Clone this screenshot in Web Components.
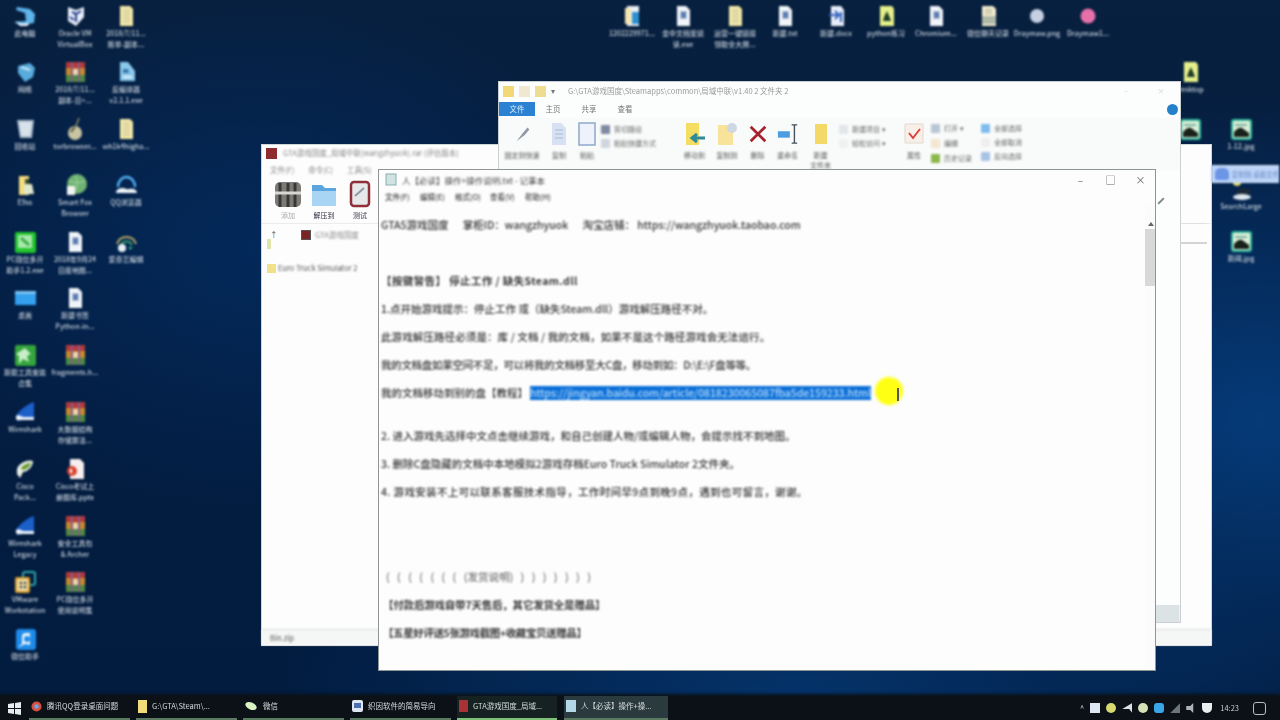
<!DOCTYPE html>
<html lang="zh"><head><meta charset="utf-8"><title>Desktop</title>
<style>
html,body{margin:0;padding:0;width:1280px;height:720px;overflow:hidden;background:#02204a;font-family:"Liberation Sans","Noto Sans CJK SC",sans-serif}
</style></head><body>
<x-desktop></x-desktop>
<script>
const G={
pc:'<path d="M4 3l13 2 5 5-1 9-15 2-5-3 12-1-1-8-9-3z" fill="#5fb4ea"/><path d="M3 17l6 3 8-1-3 3H7z" fill="#f2f6fa"/>',
vbox:'<path d="M5 3l8 3 8-3v10l-8 9-8-5z" fill="#e8eef8"/><path d="M9 8l4 2 5-3M13 10v8M7 13l4 3" stroke="#24408c" stroke-width="2" fill="none"/>',
doc:'<path d="M6 2h10l3 3v17H6z" fill="#f5e9a8"/><path d="M9 6h7M9 9h7M9 12h7M9 15h7M9 18h7" stroke="#b8b7a0" stroke-width="1.2"/>',
wdoc:'<path d="M6 2h9l4 4v16H6z" fill="#f1f5fa"/><path d="M9 8h7M9 11h7M9 14h7" stroke="#9eb0c8" stroke-width="1.3"/><rect x="10" y="8" width="5" height="6" fill="#5a7cb0"/>',
net:'<path d="M5 6l12-3 5 5-2 9-8 5-7-9z" fill="#58acdc"/><path d="M8 7l9 3" stroke="#cfeaf8" stroke-width="2"/>',
rar:'<rect x="3" y="2" width="19" height="6" fill="#b33a3a"/><rect x="3" y="8" width="19" height="7" fill="#c88a2e"/><rect x="3" y="15" width="19" height="7" fill="#4d8a43"/><path d="M9 2v20M16 2v20" stroke="#8a5a8e" stroke-width="2"/><rect x="10" y="9" width="5" height="6" fill="#ecd8a4"/>',
exe:'<path d="M6 2h8l7 9v10H6z" fill="#8cc8ec"/><path d="M9 9h5l1 4H9z" fill="#3b78a8"/><path d="M9 17h9" stroke="#e4f2fa" stroke-width="2"/>',
bin:'<path d="M4 3h17l-2 18H7z" fill="#a9bccb"/><path d="M6 5h13l-2 14H8z" fill="#d8e2ea"/>',
tor:'<path d="M16 1l-3 8" stroke="#8a8a68" stroke-width="1.6"/><ellipse cx="12" cy="16" rx="7" ry="7" fill="#c8c4a4"/><path d="M8 15c2-3 3-4 4-5" stroke="#5a5a3e" stroke-width="2"/>',
fe:'<path d="M6 3h10v19H6z" fill="#f4dd7e"/><path d="M11 11h8l2 10H11z" fill="#dfe8cc"/><path d="M12 6h4v5h-4z" fill="#3e4d2c"/>',
sf:'<circle cx="14" cy="11" r="10" fill="#6fb272"/><path d="M4 13h8v9H4z" fill="#f2f6f2"/><path d="M12 3c3 4 3 10 0 16M6 8c6 2 10 2 16 0" stroke="#a8d8a8" fill="none"/>',
qq:'<path d="M4 14A8.500 10 0 0 1 21 14" fill="none" stroke="#52aef0" stroke-width="2.500"/><path d="M2 20c0-4 4-5 7-5s3 2 6 1 8 0 8 4z" fill="#eef5fa"/>',
wx:'<rect x="2" y="2" width="21" height="21" rx="2" fill="#22c52e"/><rect x="5" y="5" width="14" height="13" fill="#a8e8ac"/><path d="M8 8l8 7" stroke="#2aa838" stroke-width="2.500"/>',
arc:'<path d="M3 14a10 10 0 0 1 19 0" stroke="#b8a868" stroke-width="2" fill="none"/><path d="M7 15a6 6 0 0 1 11 0" stroke="#3aa068" stroke-width="2" fill="none"/><circle cx="8" cy="18" r="4" fill="#e8f0f6"/><path d="M15 16l4 2-4 2z" fill="#2aa878"/>',
fold:'<rect x="2" y="5" width="21" height="14" fill="#34a0ee"/><rect x="2" y="5" width="21" height="3" fill="#7cc4f4"/>',
gr:'<rect x="2" y="2" width="21" height="21" rx="2" fill="#35a53c"/><path d="M12 5l6 6-4 2 2 6-6-3-4 5v-8l-3-2z" fill="#c8eec8"/>',
ws:'<path d="M21 2v15H11L5 21c-2-2-3-5 0-8 4-5 10-9 16-11z" fill="#1b5fc8"/><path d="M3 16c3-2 5 1 8 1h10v3H9c-2 0-5 1-6-1z" fill="#eef3fb"/>',
cis:'<path d="M4 12c2-6 10-10 16-8 0 6-6 11-10 11l-3 6-3-4z" fill="#e8efe4"/><path d="M8 11c2-3 6-5 10-5-1 4-5 7-9 7z" fill="#6c9a32"/>',
ppt:'<path d="M7 2h10l4 4v16H7z" fill="#f6eeee"/><circle cx="9" cy="14" r="5" fill="#d8432e"/><path d="M8 12v4" stroke="#fff" stroke-width="2"/>',
vm:'<rect x="10" y="2" width="12" height="13" rx="2" fill="none" stroke="#2fa6a8" stroke-width="2"/><rect x="3" y="8" width="13" height="14" rx="1" fill="#e8d8a0" stroke="#d89a2c" stroke-width="2"/><path d="M7 12h2v2H7zM11 12h2v2h-2zM7 16h2v2H7zM11 16h2v2h-2z" fill="#223"/>',
app:'<rect x="3" y="2" width="20" height="21" rx="3" fill="#1f8be8"/><path d="M17 6h-5c-2 0-3 2-3 4v6c0 2-4 3-3 4l6-3 5 1z" fill="#e8f4fc"/><circle cx="14" cy="12" r="3" fill="#1f8be8"/>',
img:'<rect x="3" y="3" width="19" height="19" rx="2" fill="#dff0d8" stroke="#2fb79a" stroke-width="2"/><path d="M5 15c3-4 6-5 8-4l7 5v4H5z" fill="#18201a"/><path d="M6 8h12" stroke="#7ab0a0" stroke-width="2"/>',
pybk:'<path d="M6 2h12l2 3v17H6z" fill="#e6f08a"/><path d="M9 17c1-5 3-8 4-10 1 3 3 6 4 10z" fill="#1f3c28"/>',
bdoc:'<path d="M7 2h10l3 4v16H7z" fill="#e8eef8"/><path d="M5 11h10M11 7l4 4-4 4" stroke="#3160c0" stroke-width="2" fill="none"/><path d="M17 8v10" stroke="#3160c0" stroke-width="2"/>',
mdoc:'<path d="M6 2h11l3 3v17H6z" fill="#f2ecd0"/><path d="M6 12h14v8H6z" fill="#b0b8a8"/><path d="M9 6h7M9 9h7" stroke="#9a9a80"/>',
bk:'<path d="M7 2h12v20H7z" fill="#e9eff6"/><path d="M5 4h6v16H5z" fill="#f3e6b0"/><rect x="12" y="8" width="7" height="12" fill="#2f90d0"/>',
grey:'<circle cx="12" cy="12" r="7" fill="#c6d0e2"/>',pink:'<circle cx="12" cy="12" r="7.500" fill="#e870a8"/>',
search:'<circle cx="8" cy="5" r="4" fill="#e0dc6e"/><path d="M7 15c3-4 9-4 13-3l2 5-15 1z" fill="#1d2a34"/><ellipse cx="13" cy="20" rx="9" ry="3" fill="#dfe8f0"/>'
};
const svg=(k,s=24)=>`<svg width="${s}" height="${s}" viewBox="0 0 24 24" aria-hidden="true">${G[k]||''}</svg>`;

class Base extends HTMLElement{
  mount(html){const r=this.attachShadow({mode:'open'});r.innerHTML=html;return r}
}
customElements.define('x-icon',class extends Base{connectedCallback(){
  const a=n=>this.getAttribute(n);
  this.mount(`<style>:host{position:absolute;left:${a('cx')-25}px;top:${a('cy')-12}px;width:50px;display:flex;flex-direction:column;align-items:center;color:#c6d0da;font:7px/11px "Noto Sans CJK SC",sans-serif;text-align:center;pointer-events:none}
  svg{display:block;filter:blur(.8px)}
  .l{white-space:nowrap;filter:blur(.8px);overflow:hidden;width:50px;font-weight:500}</style>
  ${svg(a('g'))}<div class="l">${(a('t')||'').split('|').map(s=>`<div>${s}</div>`).join('')}</div>`)
}});
customElements.define('x-rb',class extends Base{connectedCallback(){
  const a=n=>this.getAttribute(n);
  this.mount(`<style>:host{display:flex;flex-direction:column;align-items:center;width:${a('w')}px;font:7px/10px "Noto Sans CJK SC",sans-serif;color:#555;flex:none;text-align:center}
  .i{height:${a('h')||32}px;display:flex;align-items:center;justify-content:center;filter:blur(.5px)}.t{filter:blur(.8px);white-space:nowrap}</style>
  <div class="i"><slot></slot></div><div class="t">${(a('t')||'').split('|').map(s=>`<div>${s}</div>`).join('')}</div>`)
}});
customElements.define('x-rl',class extends Base{connectedCallback(){
  const a=n=>this.getAttribute(n);
  this.mount(`<style>:host{display:flex;flex-direction:column;width:${a('w')}px;flex:none;gap:${a('gap')||4}px;padding-top:${a('top')||4}px;font:7px/10px "Noto Sans CJK SC",sans-serif;color:#666}
  div{display:flex;gap:4px;align-items:center;white-space:nowrap;filter:blur(.8px)}
  i{display:block;width:9px;height:9px;flex:none;border-radius:1px}</style>
  ${a('t').split('|').map(x=>{const[c,s]=x.split(':');return `<div><i style="background:${c}"></i>${s}</div>`}).join('')}`)
}});
customElements.define('x-explorer',class extends Base{connectedCallback(){
  this.mount(`<style>:host{position:absolute;left:499px;top:82px;width:681px;height:540px;background:#fcfdfd;display:flex;flex-direction:column;box-shadow:0 0 0 1px #c9cfd3;font:7.500px/12px "Noto Sans CJK SC",sans-serif;color:#777}
  .tb{height:18px;display:flex;align-items:center;padding:0 4px;gap:5px;flex:none;filter:blur(.5px)}
  .tb i{display:block;width:11px;height:11px}
  .ti{margin-left:8px;filter:blur(.5px);color:#9a9a9a;white-space:nowrap;flex:1}
  .ctl{width:30px;text-align:center;color:#d4d4d4}
  .tabs{height:18px;display:flex;align-items:center;flex:none;filter:blur(.6px);position:relative}
  .tabs span{width:36px;text-align:center}
  .tabs .f{background:#2b82d2;color:#d9ecfb;height:14px;line-height:14px}
  .tabs b{position:absolute;right:2px;top:4px;width:11px;height:11px;border-radius:50%;background:#2480c8}
  .rib{display:flex;height:52px;flex:none;background:#f9fafa;align-items:flex-start}
  .body{flex:1;position:relative}
  .sb{position:absolute;left:656px;right:0;bottom:0;height:17px;background:#eef1f1}
  .sb::before{content:"";position:absolute;left:0;top:0;width:24px;height:17px;background:#dbe3e5}
  </style>
  <div class="tb"><i style="background:#f3d878"></i><i style="background:#f0e8d0"></i><i style="background:#eedc90"></i><span>▾</span><span class="ti">G:\\GTA游戏国度\\Steamapps\\common\\局域中联\\v1.40 2 文件夹 2</span><span class="ctl">–</span><span class="ctl">×</span></div>
  <div class="tabs"><span class="f">文件</span><span>主页</span><span>共享</span><span>查看</span><b></b></div>
  <div class="rib">
    <x-rb w="46" t="固定到快速"><svg width="22" height="22" viewBox="0 0 24 24"><path d="M6 20l7-9 5-6 2 2-5 6z" fill="#8d9aa5"/></svg></x-rb>
    <x-rb w="28" t="复制"><svg width="22" height="26" viewBox="0 0 22 26"><path d="M4 2h9l5 5v17H4z" fill="#d7e1f2"/><path d="M7 9h8M7 13h8M7 17h8" stroke="#a9bbd8"/></svg></x-rb>
    <x-rb w="28" t="粘贴"><svg width="20" height="26" viewBox="0 0 20 26"><rect x="2" y="2" width="16" height="22" fill="#eef3fb" stroke="#8fa8cc" stroke-width="1.500"/></svg></x-rb>
    <x-rl w="76" t="#7d8aa0:剪切路径|#cfd6de:粘贴快捷方式" gap="4" top="6"></x-rl>
    <x-rb w="35" t="移动到"><svg width="24" height="26" viewBox="0 0 24 26"><path d="M3 2h13v22H3z" fill="#f5dd62"/><path d="M10 17h12M14 13l-5 4 5 4" stroke="#2f8a9a" stroke-width="3" fill="none"/></svg></x-rb>
    <x-rb w="30" t="复制到"><svg width="24" height="26" viewBox="0 0 24 26"><path d="M3 4h15v20H3z" fill="#f8e39a"/><circle cx="17" cy="7" r="5" fill="#cfd8e2"/></svg></x-rb>
    <x-rb w="31" t="删除"><svg width="22" height="22" viewBox="0 0 24 24"><path d="M4 4l16 16M20 4L4 20" stroke="#a8222e" stroke-width="3"/></svg></x-rb>
    <x-rb w="29" t="重命名"><svg width="22" height="22" viewBox="0 0 24 24"><rect x="1" y="9" width="13" height="7" fill="#4c9ce0"/><path d="M19 2v20M16 2h6M16 22h6" stroke="#44505c" stroke-width="1.500"/></svg></x-rb>
    <x-rb w="37" t="新建|文件夹"><svg width="18" height="24" viewBox="0 0 18 24"><rect x="3" y="2" width="12" height="20" fill="#f5d968"/></svg></x-rb>
    <x-rl w="58" t="#e2e6ea:新建项目 ▾|#eef0f2:轻松访问 ▾" gap="4" top="6"></x-rl>
    <x-rb w="34" t="属性"><svg width="24" height="26" viewBox="0 0 24 26"><path d="M3 3h18v19H3z" fill="#f7efe8" stroke="#e4d8d0"/><path d="M7 12l4 5 7-9" stroke="#d8433c" stroke-width="2" fill="none"/></svg></x-rb>
    <x-rl w="50" t="#b8c6d6:打开 ▾|#f4e6d0:编辑|#8cb84c:历史记录" gap="5" top="5"></x-rl>
    <x-rl w="58" t="#7fbcee:全部选择|#efefef:全部取消|#a8c4e4:反向选择" gap="4" top="5"></x-rl>
  </div>
  <div class="body"><div class="sb"></div></div>`)
}});
customElements.define('x-rar',class extends Base{connectedCallback(){
  this.mount(`<style>:host{position:absolute;left:262px;top:145px;width:949px;height:500px;background:#fdfdfd;display:flex;flex-direction:column;box-shadow:0 0 0 1px #cfd6d8;font:7.500px/12px "Noto Sans CJK SC",sans-serif;color:#888}
  .t{height:16px;display:flex;align-items:center;gap:6px;padding:0 4px;flex:none}
  .t i{display:block;width:11px;height:11px;background:#8e2c30}
  .t span,.m span,.a span,.r span,.s{filter:blur(.8px);white-space:nowrap}
  .m{height:18px;display:flex;align-items:center;gap:14px;padding:0 8px;flex:none}
  .tools{height:44px;display:flex;padding-left:10px;flex:none;gap:4px}
  .tb{width:32px;display:flex;flex-direction:column;align-items:center;font-size:7px;color:#555}
  .tb svg{display:block;filter:blur(.6px)}
  .tb span{filter:blur(.7px)}
  .a{height:22px;display:flex;align-items:center;gap:5px;padding:0 8px 0 40px;border-top:1px solid #ececec;flex:none;position:relative;box-sizing:border-box}
  .a i{display:block;width:8px;height:8px;background:#7a2426;outline:1px solid #555}
  .a b{position:absolute;left:8px;color:#555;font-weight:400}
  .r{display:flex;align-items:center;gap:2px;height:18px;margin-top:14px;padding-left:5px;color:#555;position:relative;flex:none}
  .r i{display:block;width:9px;height:9px;background:#efe28a}
  .hd{position:absolute;left:5px;top:94px;width:4px;height:10px;background:#dfe4a8}
  .sp{flex:1}
  .rt{position:absolute;left:918px;top:78px;width:27px;height:18px;border-top:1px solid #e0e0e0;border-bottom:2px solid #d4d4d4}
  .s{height:16px;flex:none;border-top:1px solid #d8dcdc;background:#f5f6f6;padding:1px 8px;color:#555;line-height:14px;box-sizing:border-box}
  </style>
  <div class="t"><i></i><span>GTA游戏国度_局域中联(wangzhyuok).rar (评估版本)</span></div>
  <div class="m"><span>文件(F)</span><span>命令(C)</span><span>工具(S)</span></div>
  <div class="tools">
    <div class="tb"><svg width="32" height="30" viewBox="0 0 32 30"><rect x="3" y="3" width="26" height="25" rx="5" fill="#7c7a76"/><path d="M8 4v24M16 4v24M23 4v24" stroke="#3a3835" stroke-width="3"/><path d="M3 14h26" stroke="#d8d8d2" stroke-width="3"/></svg><span style="color:#aaa">添加</span></div>
    <div class="tb"><svg width="32" height="30" viewBox="0 0 32 30"><path d="M4 6h10l3 3h11v18H4z" fill="#5ca5df"/><path d="M4 12h24v15H4z" fill="#a9d5f5"/></svg><span style="color:#334">解压到</span></div>
    <div class="tb"><svg width="28" height="30" viewBox="0 0 28 30"><rect x="5" y="3" width="18" height="24" rx="3" fill="#e6e8ea" stroke="#8f2f3a" stroke-width="2.500"/><path d="M9 17l9-8" stroke="#8a9aa4" stroke-width="2"/></svg><span style="color:#334">测试</span></div>
  </div>
  <div class="a"><b>↑</b><i></i><span>GTA游戏国度</span></div>
  <div class="hd"></div>
  <div class="r"><i></i><span>Euro Truck Simulator 2</span></div>
  <div class="rt"></div>
  <div class="sp"></div>
  <div class="s">Bin.zip</div>`)
}});
customElements.define('x-line',class extends Base{connectedCallback(){
  const a=n=>this.getAttribute(n);
  this.mount(`<style>:host{display:block;height:28px;line-height:28px;margin-top:${a('mt')||0}px;white-space:pre;margin-left:${a('ml')||0}px;letter-spacing:${a('ls')||0}px;word-spacing:${a('ws')||0}px;color:${a('c')||'inherit'};filter:blur(.8px);font-weight:${a('fw')||500}}
  ::slotted(mark){background:#0b6fd8;color:#b8dcfa;padding:0;display:inline-block;line-height:14px;margin-left:2px;letter-spacing:-.08px}</style><slot></slot>`)
}});
customElements.define('x-notepad',class extends Base{connectedCallback(){
  this.mount(`<style>:host{position:absolute;left:379px;top:170px;width:776px;height:500px;background:#fdfdfd;display:flex;flex-direction:column;box-shadow:0 0 0 1px #8f9494;font:10.500px/14px "Noto Sans CJK SC",sans-serif;color:#363636}
  .t{height:19px;display:flex;align-items:center;padding:0 2px 0 6px;gap:5px;flex:none;font-size:8.500px;color:#444}
  .t svg{filter:blur(.6px)}
  .t span{filter:blur(.8px);white-space:nowrap;flex:1}
  .t em{font-style:normal;width:30px;margin-left:-5px;padding-left:5px;box-sizing:border-box;text-align:center;font-size:10px;color:#666;filter:blur(.5px)}
  .m{height:16px;display:flex;align-items:center;gap:7px;padding:0 0 0 6px;flex:none;font-size:7.500px;color:#444;filter:blur(.8px);font-weight:500}
  .m span{width:28px;white-space:nowrap}
  .c{flex:1;display:flex;min-height:0;padding-top:6px}
  .tx{flex:1;padding:0 0 0 2px}
  .sb{width:10px;flex:none;position:relative;background:#fbfbfb;margin-top:-6px}
  .sb::before{content:"";position:absolute;left:0;right:0;top:24px;height:57px;background:#d7d9d9;filter:blur(.5px)}
  .sb::after{content:"";position:absolute;left:3px;top:17px;border:3px solid transparent;border-bottom:4px solid #666;border-top:0}
  </style>
  <div class="t"><svg width="12" height="13" viewBox="0 0 12 13"><rect x="1" y="1" width="10" height="11" fill="#cfe3e2" stroke="#8ab0b0"/></svg><span>人【必读】操作+操作说明.txt - 记事本</span><em>–</em><em>□</em><em>×</em></div>
  <div class="m"><span>文件(F)</span><span>编辑(E)</span><span>格式(O)</span><span>查看(V)</span><span>帮助(H)</span></div>
  <div class="c"><div class="tx">
    <x-line>GTA5游戏国度      掌柜ID：wangzhyuok      淘宝店铺： https://wangzhyuok.taobao.com</x-line>
    <x-line mt="28" fw="600" ls=".4">【按键警告】 停止工作 / 缺失Steam.dll</x-line>
    <x-line>1.点开始游戏提示：停止工作 或（缺失Steam.dll）游戏解压路径不对。</x-line>
    <x-line ls=".1">此游戏解压路径必须是：库 / 文档 / 我的文档，如果不是这个路径游戏会无法运行。</x-line>
    <x-line ls="-.3">我的文档盘如果空间不足，可以将我的文档移至大C盘，移动到如：D:\\E:\\F盘等等。</x-line>
    <x-line>我的文档移动到别的盘【教程】<mark>https://jingyan.baidu.com/article/0818230065087fba5de159233.html</mark></x-line>
    <x-line mt="15">2. 进入游戏先选择中文点击继续游戏，和自己创建人物/或编辑人物，会提示找不到地图。</x-line>
    <x-line>3. 删除C盘隐藏的文档中本地模拟2游戏存档Euro Truck Simulator 2文件夹。</x-line>
    <x-line ls=".35">4. 游戏安装不上可以联系客服技术指导，工作时间早9点到晚9点，遇到也可留言，谢谢。</x-line>
    <x-line mt="57" ml="5" ws="5" c="#777">( ( ( ( ( ( ( (发货说明) ) ) ) ) ) ) )</x-line>
    <x-line fw="600" ml="2" ls="-.2">【付款后游戏自带7天售后，其它发货全是赠品】</x-line>
    <x-line fw="600" ml="2" ls="-.4">【五星好评送5张游戏截图+收藏宝贝送赠品】</x-line>
  </div><div class="sb"></div></div>`)
}});
customElements.define('x-task',class extends Base{connectedCallback(){
  const a=n=>this.getAttribute(n);const act=a('act');
  this.mount(`<style>:host{display:flex;align-items:center;gap:5px;width:${a('w')||101}px;height:24px;flex:none;box-sizing:border-box;padding:0 4px 2px 2px;margin-right:${a('mr')||6}px;color:#d5dbdc;font:7.500px/12px "Noto Sans CJK SC",sans-serif;background:${act==='2'?'#2b3a3f':act==='1'?'#152221':'transparent'};border-bottom:2px solid ${act==='1'?'#7dc078':'#5b7a62'}}
  span{white-space:nowrap;overflow:hidden;filter:blur(.7px)}svg{filter:blur(.6px);flex:none}</style>
  <slot></slot><span>${a('t')}</span>`)
}});
customElements.define('x-taskbar',class extends Base{connectedCallback(){
  this.mount(`<style>:host{height:24px;flex:none;display:flex;align-items:flex-end;background:#0b1116;box-shadow:0 -2px 3px #0b1116;position:relative}
  .st{width:29px;height:24px;display:flex;align-items:center;justify-content:center;flex:none}
  .st svg{filter:blur(.5px)}
  .tray{margin-left:auto;height:24px;display:flex;align-items:center;gap:6px;color:#c8d0d4;font:7.500px/12px "Noto Sans CJK SC",sans-serif;padding-right:14px;filter:blur(.7px)}
  .tray i{display:block;width:10px;height:10px;flex:none}
  </style>
  <div class="st"><svg width="13" height="13" viewBox="0 0 13 13"><path d="M0 2l6-1v5H0zM7 1l6-1v6H7zM0 7h6v5l-6-1zM7 7h6v6l-6-1z" fill="#e4ecf0"/></svg></div>
  <slot></slot>
  <div class="tray"><span>^</span><i style="background:#dfe6f4"></i><i style="background:#d8d870;border-radius:50%"></i><i style="background:#d8e0e8;clip-path:polygon(0 60%,100% 0,100% 100%,70% 60%)"></i><i style="background:#d4e2b8;border-radius:50%"></i><i style="background:#38a6e8;border-radius:3px"></i><i style="background:#6a767c;clip-path:polygon(100% 0,100% 100%,0 100%)"></i><i style="background:#aab4ba;clip-path:polygon(0 30%,40% 30%,70% 0,70% 100%,40% 70%,0 70%)"></i><i style="background:#e8edf0;border-radius:0 0 5px 5px"></i><span style="margin:0 8px 0 2px">14:23</span><i style="border:1px solid #b4bec4;border-radius:3px;width:11px;height:11px"></i></div>`)
}});
customElements.define('x-desktop',class extends Base{connectedCallback(){
  const ic=[
  [25,16,'pc','此电脑'],[75,16,'vbox','Oracle VM|VirtualBox'],[126,16,'doc','2018/7/11...|账单-副本...'],
  [25,72,'net','网络'],[75,72,'rar','2018/7/11...|副本-日+...'],[126,72,'exe','反编译器|v2.1.1.exe'],
  [25,129,'bin','回收站'],[75,129,'tor','torbrowser...'],[126,129,'doc','wh1k4higha...'],
  [25,185,'fe','E9ss'],[75,185,'sf','Smart Fox|Browser'],[126,185,'qq','QQ浏览器'],
  [25,242,'wx','PC微信多开|助手1.2.exe'],[75,242,'wdoc','2018年9月24|日度地图...'],[126,242,'arc','爱奇艺编辑'],
  [25,298,'fold','桌面'],[75,298,'wdoc','新建书签|Python-in...'],
  [25,355,'gr','新能工具安装|合集'],[75,355,'rar','fragments.h...'],
  [25,412,'ws','Wireshark'],[75,412,'rar','大数据结构|存储算法...'],
  [25,469,'cis','Cisco|Pack...'],[75,469,'ppt','Cisco考试上|册题库.pptx'],
  [25,526,'ws','Wireshark|Legacy'],[75,526,'rar','安全工具包|& Archer'],
  [25,582,'vm','VMware|Workstation'],[75,582,'rar','PC微信多开|使用说明集'],
  [25,639,'app','微信助手'],
  [632,16,'bk','1202229971...'],[683,16,'wdoc','金中文档案说|读.exe'],[735,16,'doc','运营一键链接|领取全大牌...'],[785,16,'wdoc','新建.txt'],[836,16,'bdoc','新建.docx'],[886,16,'pybk','python练习'],[936,16,'wdoc','Chromium...'],[988,16,'mdoc','微信聊天记录'],[1037,16,'grey','Draymaw.png'],[1088,16,'pink','Draymaw1...'],
  [1190,72,'pybk','Desktop'],[1190,129,'img',''],[1241,129,'img','1-12.jpg'],[1241,189,'search','SearchLarge'],[1241,241,'img','新闻.jpg']
  ];
  const r=this.mount(`<style>:host{display:flex;flex-direction:column;width:1280px;height:720px;overflow:hidden;
  background:radial-gradient(ellipse 380px 320px at 1260px 420px,#053a78,transparent),radial-gradient(ellipse 520px 220px at 800px 700px,#04336a,transparent),radial-gradient(ellipse 360px 260px at 260px 250px,#03295a,transparent),linear-gradient(180deg,#08203f 0,#041d40 35%,#021c40 100%)}
  .cv{flex:1;position:relative;min-height:0}
  .tip{position:absolute;left:1212px;top:166px;width:66px;height:16px;background:#bcd4f8;box-shadow:0 0 0 1px #cfe0fb;display:flex;align-items:center;gap:3px;padding-left:3px;box-sizing:border-box;font:6.500px/10px "Noto Sans CJK SC",sans-serif;color:#6a88c4;filter:blur(.8px);overflow:hidden}
  .tip i{display:block;width:14px;height:12px;background:#6d95e6;border-radius:40% 40% 2px 2px;flex:none}
  .tip span{white-space:nowrap}
  .pen{position:absolute;left:1157px;top:200px;width:8px;height:2px;background:#7f8a8a;transform:rotate(-45deg);filter:blur(.5px)}
  .cur{position:absolute;left:875px;top:377px;width:28px;height:28px;border-radius:50%;background:#ffff14;filter:blur(1.4px)}
  .ib{position:absolute;left:897px;top:388px;width:2px;height:13px;background:#555;filter:blur(.5px)}
  </style>
  <div class="cv">${ic.map(([x,y,g,t])=>`<x-icon cx="${x}" cy="${y}" g="${g}" t="${t}"></x-icon>`).join('')}
  <x-rar></x-rar><x-explorer></x-explorer><x-notepad></x-notepad>
  <div class="tip"><i></i><span>复制到 桌面文件</span></div><div class="pen"></div><div class="cur"></div><div class="ib"></div></div>
  <x-taskbar>
   <x-task t="腾讯QQ登录桌面问题"><svg width="11" height="11" viewBox="0 0 12 12"><circle cx="6" cy="6" r="5.500" fill="#d8503c"/><circle cx="6" cy="6" r="2.500" fill="#6aa5e8"/></svg></x-task>
   <x-task w="101" t="G:\\GTA\\Steam\\..."><svg width="9" height="13" viewBox="0 0 9 13"><rect width="9" height="13" fill="#f0dc78"/></svg></x-task>
   <x-task t="微信"><svg width="13" height="10" viewBox="0 0 13 10"><ellipse cx="6" cy="5" rx="6" ry="3.500" fill="#d9f2c2" transform="rotate(25 6 5)"/></svg></x-task>
   <x-task t="织因软件的简易导向"><svg width="11" height="12" viewBox="0 0 11 12"><rect width="11" height="12" rx="2" fill="#dfe7f4"/><rect x="2" y="3" width="7" height="5" fill="#4c6fb0"/></svg></x-task>
   <x-task act="1" w="100" mr="7" t="GTA游戏国度_局域..."><svg width="9" height="12" viewBox="0 0 9 12"><rect width="9" height="12" fill="#a83236"/></svg></x-task>
   <x-task act="2" w="104" mr="0" t="人【必读】操作+操..."><svg width="10" height="12" viewBox="0 0 10 12"><rect width="10" height="12" fill="#b4d8e8"/></svg></x-task>
  </x-taskbar>`);
}});
</script></body></html>
